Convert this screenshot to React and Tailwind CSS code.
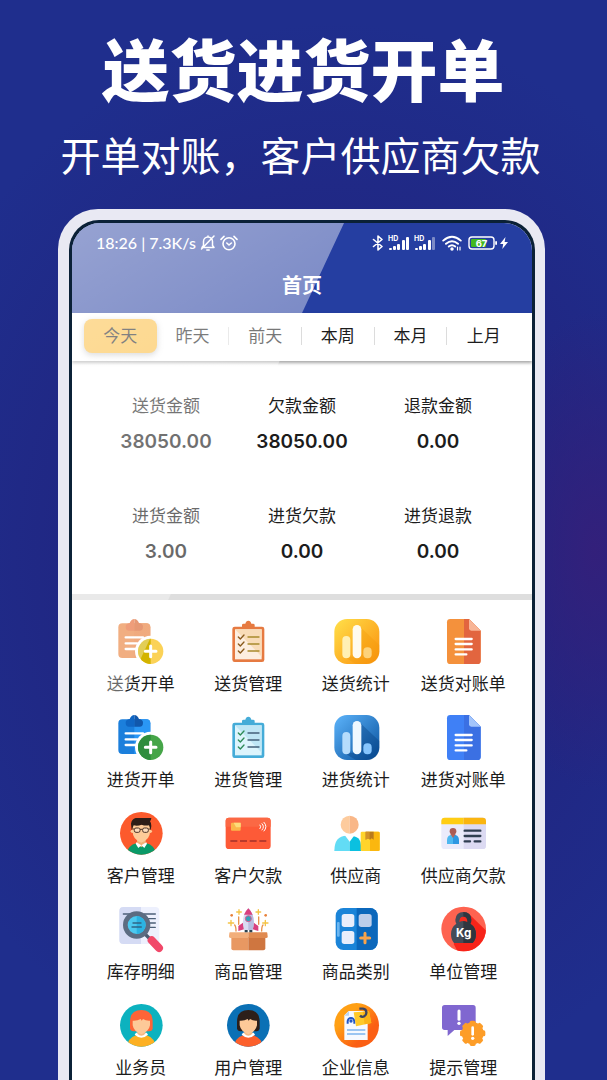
import { useState } from "react";

const tabs = ["今天", "昨天", "前天", "本周", "本月", "上月"];

const stats = [
  { label: "送货金额", value: "38050.00" },
  { label: "欠款金额", value: "38050.00" },
  { label: "退款金额", value: "0.00" },
  { label: "进货金额", value: "3.00" },
  { label: "进货欠款", value: "0.00" },
  { label: "进货退款", value: "0.00" },
];

function Icon({ children }) {
  return (
    <svg viewBox="0 0 144 144" className="h-12 w-12" aria-hidden="true">
      {children}
    </svg>
  );
}

function ClipboardAdd({ body, bodyDark, clip, clipDark, circle, circleDark }) {
  return (
    <Icon>
      <rect x="4" y="16" width="96" height="104" rx="12" fill={body} />
      <path d="M52 16h36a12 12 0 0 1 12 12v80a12 12 0 0 1-12 12H52z" fill={bodyDark} />
      <path d="M26 26q0-9 12-11q5-12 14-12v35H36q-10 0-10-12z" fill={clip} />
      <path d="M78 26q0-9-12-11q-5-12-14-12v35h16q10 0 10-12z" fill={clipDark} />
      <path d="M26 58h52M26 76h34M26 93h32" stroke="#fff" strokeWidth="7" strokeLinecap="round" />
      <circle cx="101" cy="100" r="47" fill="#fff" />
      <circle cx="101" cy="100" r="38" fill={circle} />
      <path d="M101 62a38 38 0 0 0 0 76z" fill={circleDark} />
      <path d="M85 100h32M101 84v32" stroke="#fff" strokeWidth="9" strokeLinecap="round" />
    </Icon>
  );
}

function Checklist({ frame, paper, paperDark, check, line }) {
  return (
    <Icon>
      <rect x="25" y="26" width="96" height="106" rx="7" fill={frame} />
      <rect x="33" y="34" width="80" height="90" fill={paper} />
      <path d="M33 34l80 82V34z" fill={paperDark} />
      <path d="M54 30v-9q0-4 5-4h5q2-9 9-9t9 9h5q5 0 5 4v9z" fill={frame} />
      <path
        d="M43 57l6 6 11-12M43 78l6 6 11-12M43 99l6 6 11-12"
        fill="none"
        stroke={check}
        strokeWidth="4"
        strokeLinecap="round"
        strokeLinejoin="round"
      />
      <path d="M72 57h33M72 78h33M72 99h33" stroke={line} strokeWidth="4" strokeLinecap="round" />
    </Icon>
  );
}

function BarStats({ id, from, to, shadow, bar, barLight, dot }) {
  return (
    <Icon>
      <linearGradient id={id} x1="0" y1="0" x2="1" y2="1">
        <stop offset="0" stopColor={from} />
        <stop offset="1" stopColor={to} />
      </linearGradient>
      <rect x="7" y="3" width="135" height="135" rx="38" fill={`url(#${id})`} />
      <path d="M84 26l58 55v20a37 37 0 0 1-37 37H72l-34-20 26-2z" fill={shadow} opacity="0.35" />
      <rect x="31" y="54" width="24" height="67" rx="12" fill={bar} />
      <rect x="62" y="21" width="26" height="100" rx="13" fill={barLight} />
      <rect x="94" y="88" width="25" height="33" rx="12" fill={dot} />
    </Icon>
  );
}

function DocIcon({ left, right, fold }) {
  return (
    <Icon>
      <path d="M34 3h56l35 35v90a10 10 0 0 1-10 10H34a10 10 0 0 1-10-10V13A10 10 0 0 1 34 3z" fill={left} />
      <path d="M75 3h15l35 35v90a10 10 0 0 1-10 10H75z" fill={right} />
      <path d="M90 3l35 35H97a7 7 0 0 1-7-7z" fill={fold} />
      <path d="M50 63h48M50 78h48M50 94h48M50 109h32" stroke="#fff" strokeWidth="7" strokeLinecap="round" />
    </Icon>
  );
}

function ManAvatar() {
  return (
    <Icon>
      <clipPath id="man">
        <circle cx="73" cy="70" r="64" />
      </clipPath>
      <g clipPath="url(#man)">
        <rect width="144" height="144" fill="#fc5a2c" />
        <path d="M28 144q-2-37 32-45h26q34 8 32 45z" fill="#0b9a68" />
        <path d="M60 84h26v17l-13 11-13-11z" fill="#f3b277" />
        <path d="M58 97l15 9-9 8-8-13zM88 97l-15 9 9 8 8-13z" fill="#fff" />
        <path d="M47 44h52v22q0 22-26 32q-26-10-26-32z" fill="#fdcb98" />
        <circle cx="46" cy="64" r="5" fill="#fdcb98" />
        <circle cx="100" cy="64" r="5" fill="#fdcb98" />
        <path d="M44 61l-2-20q2-14 14-17h47q-1 8-4 10q5 6 4 14l-2 13-5-15q-12 2-22-2q-12 5-24 2z" fill="#2d1d17" />
      </g>
      <g fill="#fff" fillOpacity="0.35" stroke="#4a3327" strokeWidth="3">
        <rect x="52" y="54" width="17" height="13" rx="5" />
        <rect x="77" y="54" width="17" height="13" rx="5" />
        <path d="M69 58h8M46 57h6M94 57h6" />
      </g>
    </Icon>
  );
}

function BankCard() {
  return (
    <Icon>
      <rect x="5" y="23" width="135" height="94" rx="10" fill="#fd5a37" />
      <path d="M5 50V33a10 10 0 0 1 10-10h115a10 10 0 0 1 10 10v17z" fill="#fb6844" />
      <rect x="21" y="38" width="29" height="24" rx="3" fill="#fbb64a" />
      <path d="M29 38h21v14H36z" fill="#fddc7a" />
      <path
        d="M108 45q5 5 0 11M114 41q9 9 0 19M120 37q12 13 0 26"
        fill="none"
        stroke="#fff"
        strokeWidth="3"
        strokeLinecap="round"
      />
      <path d="M19 93h21M48 93h21M77 93h21M106 93h21" stroke="#a4302a" strokeWidth="4" />
    </Icon>
  );
}

function Supplier() {
  return (
    <Icon>
      <path d="M7 123q0-46 37-46h9v46z" fill="#62dcf5" />
      <path d="M53 77q34 0 34 30v16H53z" fill="#0bc0e0" />
      <path d="M38 75h30l-15 20z" fill="#fff" />
      <path d="M53 17a27 27 0 0 0 0 54z" fill="#fdcb9d" />
      <path d="M53 17a27 27 0 0 1 0 54z" fill="#f9b788" />
      <rect x="86" y="65" width="57" height="58" rx="4" fill="#ffd42b" />
      <path d="M114 65h25a4 4 0 0 1 4 4v50a4 4 0 0 1-4 4h-25z" fill="#fbb70f" />
      <path d="M101 65h24v24l-6-4-5 4-6-4-7 4z" fill="#b97a1c" />
      <path d="M101 65h12v22l-5-2-7 4z" fill="#d39226" />
    </Icon>
  );
}

function IdCard() {
  return (
    <Icon>
      <rect x="7" y="23" width="134" height="94" rx="10" fill="#ebebfb" />
      <path d="M74 23h57a10 10 0 0 1 10 10v74a10 10 0 0 1-10 10H74z" fill="#dcdaf2" />
      <path d="M7 43V33a10 10 0 0 1 10-10h57v20z" fill="#ffcd14" />
      <path d="M141 43V33a10 10 0 0 0-10-10H74v20z" fill="#fab510" />
      <path d="M24 102V90q0-16 18-16v28z" fill="#4fb8f0" />
      <path d="M60 102V90q0-16-18-16v28z" fill="#2e97e2" />
      <path d="M34 72h16l-8 12z" fill="#b5645a" />
      <circle cx="42" cy="64" r="10" fill="#ab5b55" />
      <path d="M77 62h47M77 78h47M77 94h16M107 94h17" stroke="#2f3d50" strokeWidth="7" strokeLinecap="round" />
    </Icon>
  );
}

function StockSearch() {
  return (
    <Icon>
      <rect x="7" y="3" width="120" height="111" rx="12" fill="#edf0fd" />
      <path d="M19 3h53v111H19a12 12 0 0 1-12-12V15A12 12 0 0 1 19 3z" fill="#d5dbf4" />
      <path d="M19 24h20M82 24h33M94 38h21M99 51h16M97 64h18" stroke="#4c5f78" strokeWidth="4" strokeLinecap="round" />
      <path d="M84 84l18 18" stroke="#4c5b70" strokeWidth="10" />
      <path d="M104 103l22 23" stroke="#f14869" strokeWidth="24" strokeLinecap="round" />
      <circle cx="59" cy="57" r="34" fill="#4cc9f0" stroke="#5c6c82" strokeWidth="14" />
      <path d="M59 30a27 27 0 0 1 0 54z" fill="#2bb3e2" />
      <path d="M48 51h24M45 63h28" stroke="#2f6788" strokeWidth="4" strokeLinecap="round" />
    </Icon>
  );
}

function RocketBox() {
  return (
    <Icon>
      <path d="M22 94h51v39H28a6 6 0 0 1-6-6z" fill="#e89862" />
      <path d="M73 94h51v33a6 6 0 0 1-6 6H73z" fill="#cf7640" />
      <path d="M18 79h55v17H20q-6 0-5-5l1-9q0-3 2-3z" fill="#f2ae7b" />
      <path d="M128 79H73v17h53q6 0 5-5l-1-9q0-3-2-3z" fill="#e08a50" />
      <path d="M60 48L43 60v15l17-5zM86 48l17 12v15l-17-5z" fill="#d9407f" />
      <path d="M73 7Q49 32 60 72h26Q97 32 73 7z" fill="#d9dcf2" />
      <path d="M73 7Q97 32 86 72H73z" fill="#b9bde0" />
      <path d="M73 7q-9 9-13 19h26Q82 16 73 7z" fill="#d9407f" />
      <circle cx="73" cy="38" r="9" fill="#33a3b8" stroke="#e05a90" strokeWidth="3" />
      <path d="M62 72h9v7h-9zM76 72h9v7h-9z" fill="#2c4350" />
      <g stroke="#f5c445" strokeWidth="4" fill="none" strokeLinecap="round">
        <path d="M45 11v14M38 18h14M103 11v14M96 18h14M21 43v16M13 51h16M124 43v16M116 51h16" />
      </g>
      <g stroke="#e8914a" strokeWidth="4" fill="none" strokeLinecap="round">
        <path d="M44 33v22M104 33v22M36 75q0-14-4-18M113 75q0-14 4-18" />
      </g>
      <circle cx="23" cy="28" r="4" fill="#e8813a" />
      <circle cx="125" cy="28" r="4" fill="#e8813a" />
    </Icon>
  );
}

function CategoryGrid() {
  return (
    <Icon>
      <rect x="11" y="6" width="126" height="126" rx="23" fill="#1b84d8" />
      <path d="M74 6h40a23 23 0 0 1 23 23v80a23 23 0 0 1-23 23H74z" fill="#0b67bb" />
      <rect x="15" y="48" width="8" height="44" rx="3" fill="#6cb6f0" />
      <rect x="29" y="24" width="38" height="39" rx="8" fill="#e9eefb" />
      <rect x="80" y="24" width="39" height="39" rx="8" fill="#bccdea" />
      <rect x="29" y="75" width="38" height="39" rx="8" fill="#e9eefb" />
      <path d="M86 96h27M99 82v28" stroke="#f9a34a" strokeWidth="9" strokeLinecap="round" />
    </Icon>
  );
}

function Kettlebell() {
  return (
    <Icon>
      <clipPath id="bell">
        <circle cx="74" cy="69" r="67" />
      </clipPath>
      <g clipPath="url(#bell)">
        <rect width="144" height="144" fill="#fe6350" />
        <path d="M90 24l60 58v62H60l-16-30z" fill="#f7241a" />
      </g>
      <path
        d="M73 18q23 0 24 23q0 8-3 12q17 11 17 31q0 17-10 27H45Q36 101 36 84q0-20 16-31q-3-4-3-12Q51 18 73 18z"
        fill="#454c58"
      />
      <path d="M73 18q23 0 24 23q0 8-3 12q17 11 17 31q0 17-10 27H73z" fill="#30363f" />
      <path d="M61 48q0-16 12-16t12 16q-12-6-24 0z" fill="#f52b1e" />
      <text x="74" y="93" textAnchor="middle" fontSize="35" fontWeight="700" fill="#fff" fontFamily="Inter, sans-serif">
        Kg
      </text>
    </Icon>
  );
}

function WomanAvatar({ id, bg, hair, shirt }) {
  return (
    <Icon>
      <clipPath id={id}>
        <circle cx="73" cy="70" r="64" />
      </clipPath>
      <g clipPath={`url(#${id})`}>
        <rect width="144" height="144" fill={bg} />
        <path d="M39 79V60q0-36 34-36t34 36v19q-1 9-10 9H50q-10 0-11-9z" fill={hair} />
        <path d="M30 144q-2-34 27-44h32q29 10 27 44z" fill={shirt} />
        <path d="M53 98q20 18 40 0l-4-6H57z" fill="#fff" />
        <path d="M61 80h24v15q-12 12-24 0z" fill="#f5b883" />
        <path d="M47 56q14 1 24-5l3 5 4-5q9 6 21 5v14q-3 18-26 27q-23-9-26-27z" fill="#fdc998" />
      </g>
    </Icon>
  );
}

function CompanyInfo() {
  return (
    <Icon>
      <linearGradient id="company" x1="0" y1="0" x2="1" y2="1">
        <stop offset="0.3" stopColor="#ffa015" />
        <stop offset="0.7" stopColor="#fb5f14" />
      </linearGradient>
      <circle cx="74" cy="70" r="67" fill="url(#company)" />
      <path d="M50 27h57v87H37V40z" fill="#f6f9ff" />
      <path d="M37 41l14-14v14z" fill="#b9d6f5" />
      <path d="M47 65v-7a10 10 0 0 1 20 0v7" fill="none" stroke="#2257c4" strokeWidth="6" />
      <circle cx="57" cy="57" r="5" fill="#2257c4" />
      <path d="M65 31l46-3 7 35-46 10z" fill="#ffc928" />
      <path d="M92 29l19-1 7 35-20 4z" fill="#fbb317" />
      <path d="M82 20h11q9 1 10 10t-6 13q-7 4-13-2" fill="none" stroke="#3d4560" strokeWidth="7" />
      <path d="M45 84h55M45 96h55" stroke="#7db4ee" strokeWidth="5" />
    </Icon>
  );
}

function AlertSettings() {
  const teeth = [0, 45, 90, 135, 180, 225, 270, 315];
  return (
    <Icon>
      <path d="M17 9h85a8 8 0 0 1 8 8v59a8 8 0 0 1-8 8H46l-20 18V84h-9a8 8 0 0 1-8-8V17a8 8 0 0 1 8-8z" fill="#8067d0" />
      <path d="M60 27v25" stroke="#fff" strokeWidth="9" strokeLinecap="round" />
      <circle cx="60" cy="64" r="5" fill="#fff" />
      <g fill="#fd9d28">
        <circle cx="101" cy="94" r="33" />
        {teeth.map((deg) => (
          <rect key={deg} x="92" y="56" width="18" height="20" rx="5" transform={`rotate(${deg} 101 94)`} />
        ))}
      </g>
      <path d="M101 77v20" stroke="#fff" strokeWidth="8" strokeLinecap="round" />
      <circle cx="101" cy="109" r="5" fill="#fff" />
    </Icon>
  );
}

const menu = [
  {
    label: "送货开单",
    icon: (
      <ClipboardAdd
        body="#ea8440"
        bodyDark="#e87f3c"
        clip="#e66b35"
        clipDark="#d9632c"
        circle="#fbd257"
        circleDark="#d3b400"
      />
    ),
  },
  {
    label: "送货管理",
    icon: <Checklist frame="#e67a41" paper="#fdeee0" paperDark="#f9dcb8" check="#8a5a1c" line="#a98a2c" />,
  },
  {
    label: "送货统计",
    icon: (
      <BarStats id="sales" from="#ffe04a" to="#fb8e0c" shadow="#f09a08" bar="#fff0b4" barLight="#fffbee" dot="#fdd27a" />
    ),
  },
  { label: "送货对账单", icon: <DocIcon left="#f4913c" right="#e2653f" fold="#f8b596" /> },
  {
    label: "进货开单",
    icon: (
      <ClipboardAdd
        body="#1b7fdc"
        bodyDark="#2a97f5"
        clip="#0f66c4"
        clipDark="#1158ac"
        circle="#45a548"
        circleDark="#2f8d3d"
      />
    ),
  },
  {
    label: "进货管理",
    icon: <Checklist frame="#45acd8" paper="#dcf4fc" paperDark="#bfe6f5" check="#2e8b57" line="#44607a" />,
  },
  {
    label: "进货统计",
    icon: (
      <BarStats id="buys" from="#5db4fb" to="#07509c" shadow="#043a78" bar="#b5dcfc" barLight="#eff8ff" dot="#86c5fd" />
    ),
  },
  { label: "进货对账单", icon: <DocIcon left="#3f80f6" right="#3b70e3" fold="#a3c5fb" /> },
  { label: "客户管理", icon: <ManAvatar /> },
  { label: "客户欠款", icon: <BankCard /> },
  { label: "供应商", icon: <Supplier /> },
  { label: "供应商欠款", icon: <IdCard /> },
  { label: "库存明细", icon: <StockSearch /> },
  { label: "商品管理", icon: <RocketBox /> },
  { label: "商品类别", icon: <CategoryGrid /> },
  { label: "单位管理", icon: <Kettlebell /> },
  { label: "业务员", icon: <WomanAvatar id="staff" bg="#0cb2bf" hair="#fd6437" shirt="#fdb022" /> },
  { label: "用户管理", icon: <WomanAvatar id="user" bg="#0a70b5" hair="#2d1f1a" shirt="#fc5f2b" /> },
  { label: "企业信息", icon: <CompanyInfo /> },
  { label: "提示管理", icon: <AlertSettings /> },
];

function SignalIcon({ weak }) {
  return (
    <svg viewBox="0 0 22 16" className="h-4 w-[22px]" fill="#fff" aria-hidden="true">
      <text x="0" y="6" fontSize="7" fontWeight="700" fontFamily="Inter, sans-serif">
        HD
      </text>
      <rect x="1" y="13" width="3" height="2" rx="1" />
      <rect x="5" y="11" width="3" height="4" rx="1" />
      <rect x="9" y="9" width="3" height="6" rx="1" />
      <rect x="14" y="5" width="3" height="10" rx="1" />
      <rect x="18" y="2" width="3" height="13" rx="1" opacity={weak ? 0.4 : 1} />
    </svg>
  );
}

function StatusBar() {
  return (
    <div className="flex h-10 items-center justify-between px-6 text-white">
      <div className="flex items-center gap-1">
        <span className="font-['Lato','Noto_Sans_CJK_SC',sans-serif] text-base leading-6 font-medium">18:26 | 7.3K/s</span>
        <svg
          viewBox="0 0 16 16"
          className="h-4 w-4"
          fill="none"
          stroke="#fff"
          strokeWidth="1.5"
          strokeLinecap="round"
          strokeLinejoin="round"
          aria-hidden="true"
        >
          <path d="M2 12.5h12l-1.5-2V6.5a4.5 4.5 0 0 0-9 0v4zM8 2V1M6.8 15h2.4M14 1L1.5 14" />
        </svg>
        <svg
          viewBox="0 0 18 16"
          className="h-4 w-[18px]"
          fill="none"
          stroke="#fff"
          strokeWidth="1.6"
          strokeLinecap="round"
          strokeLinejoin="round"
          aria-hidden="true"
        >
          <circle cx="9" cy="8.8" r="6" />
          <path d="M6.8 8l2.2 2 2.4-2M1 4.4l3-3M17 4.4l-3-3" />
        </svg>
      </div>
      <div className="flex items-center gap-1">
        <svg
          viewBox="0 0 12 16"
          className="h-4 w-3"
          fill="none"
          stroke="#fff"
          strokeWidth="1.6"
          strokeLinejoin="round"
          strokeLinecap="round"
          aria-hidden="true"
        >
          <path d="M1.5 4.5l8.5 7L6 15V1l4 3.5-8.5 7" />
        </svg>
        <SignalIcon />
        <SignalIcon weak />
        <svg
          viewBox="0 0 20 16"
          className="ml-0.5 h-4 w-5"
          fill="none"
          stroke="#fff"
          strokeWidth="1.9"
          strokeLinecap="round"
          aria-hidden="true"
        >
          <path d="M1.2 5.6q8.8-7.6 17.6 0M4 8.8q6-5 12 0M6.8 11.6q3.2-2.6 6.4 0" />
          <circle cx="10" cy="14" r="0.8" fill="#fff" />
          <path d="M15.5 12v3M18 12v3" strokeWidth="1.2" />
        </svg>
        <svg viewBox="0 0 30 16" className="ml-0.5 h-4 w-[30px]" aria-hidden="true">
          <rect x="1" y="2" width="25" height="12" rx="3" fill="none" stroke="#fff" strokeWidth="1.4" />
          <rect x="3" y="4" width="15" height="8" rx="1" fill="#42b81e" />
          <rect x="27.2" y="6" width="1.8" height="4" rx="0.9" fill="#fff" />
          <text x="13.5" y="11.6" textAnchor="middle" fontSize="9.5" fontWeight="700" fill="#fff" fontFamily="Inter, sans-serif">
            67
          </text>
        </svg>
        <svg viewBox="0 0 8 14" className="-ml-0.5 h-3.5 w-2" fill="#fff" aria-hidden="true">
          <path d="M5.5 1L0 8h3.2L2.3 13 8 6H4.6z" />
        </svg>
      </div>
    </div>
  );
}

export default function App() {
  const [active, setActive] = useState(0);

  return (
    <div className="flex min-h-screen flex-col overflow-hidden bg-[#1f2e8d] bg-[radial-gradient(ellipse_110px_240px_at_98%_51%,#33207b,transparent),radial-gradient(ellipse_75%_50%_at_55%_52%,#21237e_35%,transparent)] font-['Noto_Sans_CJK_SC',sans-serif] text-[#1c1c1c]">
      <header className="px-4 pt-[31px] text-center text-white">
        <h1 className="text-[67px] leading-[72px] font-black">送货进货开单</h1>
        <p className="mt-[27px] pr-1.5 text-[40px] leading-[48px] whitespace-nowrap">开单对账，客户供应商欠款</p>
      </header>

      <main className="mt-[31px] mr-[62px] ml-[58px] flex flex-1 flex-col rounded-t-[40px] bg-[#e9e9f3] pt-[11px] pr-[10px] pl-[11px]">
        <div className="flex flex-1 flex-col rounded-t-[30px] bg-[#0b2137] px-[3px] pt-[3px]">
          <div className="relative flex-1 overflow-hidden rounded-t-[28px] bg-white">
            <div className="bg-[#253ea1]">
              <StatusBar />
              <h2 className="pb-[6px] text-center text-xl leading-[44px] font-bold text-white">首页</h2>
            </div>

            <nav className="grid grid-cols-6 px-3 pt-[6px] pb-2 shadow-[0_2px_3px_rgba(0,0,0,0.35)]">
              {tabs.map((tab, i) => (
                <div key={tab} className="flex items-center">
                  <button
                    type="button"
                    onClick={() => setActive(i)}
                    className={`h-[34px] flex-1 rounded-lg pb-0.5 text-[17px] leading-6 ${
                      i === active ? "bg-[#fcbd3f] shadow-[0_2px_6px_rgba(0,0,0,0.25)]" : ""
                    }`}
                  >
                    {tab}
                  </button>
                  {i > 0 && i < tabs.length - 1 && <span className="h-[18px] w-px bg-[#dcdcdc]" />}
                </div>
              ))}
            </nav>

            <dl className="grid grid-cols-3 gap-y-[47px] border-b-[6px] border-[#dedede] px-[26px] pt-8 pb-7 text-center">
              {stats.map((item) => (
                <div key={item.label}>
                  <dt className="text-[17px] leading-6">{item.label}</dt>
                  <dd className="mt-[11px] font-['Inter',sans-serif] text-[19px] leading-7 font-semibold">{item.value}</dd>
                </div>
              ))}
            </dl>

            <div className="grid grid-cols-4 gap-y-[19px] px-[15px] pt-[18px]">
              {menu.map((item) => (
                <button key={item.label} type="button" className="flex flex-col items-center">
                  {item.icon}
                  <span className="mt-[5px] text-[17px] leading-6 whitespace-nowrap">{item.label}</span>
                </button>
              ))}
            </div>

            {/* glass reflection across the top left corner */}
            <div className="pointer-events-none absolute top-0 left-0 h-[583px] w-[272px] bg-[linear-gradient(150deg,rgba(255,255,255,0.52),rgba(255,255,255,0.34)_45%)] [clip-path:polygon(0_0,100%_0,0_100%)]" />
          </div>
        </div>
      </main>
    </div>
  );
}
